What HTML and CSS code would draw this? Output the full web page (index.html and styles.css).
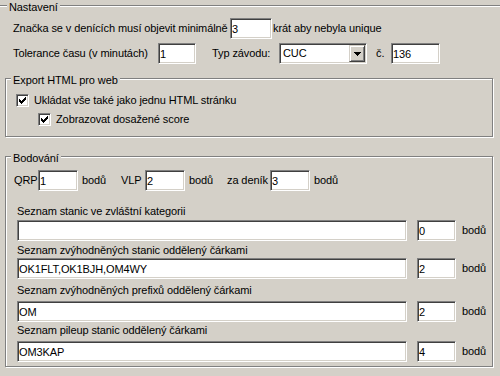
FILE: index.html
```html
<!DOCTYPE html>
<html lang="cs">
<head>
  <meta charset="UTF-8"/>
  <title>Nastavení</title>
  <link rel="stylesheet" href="styles.css">
</head>
<body>
  <div class="group main">
    <span class="caption">Nastavení</span>
    <div class="row r1">
      <span class="lbl w-min">Značka se v denících musí objevit minimálně</span>
      <input class="edit e-min" type="text" value="3">
      <span class="lbl after">krát aby nebyla unique</span>
    </div>
    <div class="row r2">
      <span class="lbl w-tol">Tolerance času (v minutách)</span>
      <input class="edit e-tol" type="text" value="1">
      <span class="lbl w-typ">Typ závodu:</span>
      <div class="combo">
        <span class="combo-text">CUC</span>
        <span class="drop"><svg width="7" height="4" viewBox="0 0 7 4"><path d="M0 0h7v1H0zM1 1h5v1H1zM2 2h3v1H2zM3 3h1v1H3z" fill="#000"/></svg></span>
      </div>
      <span class="lbl w-c">č.</span>
      <input class="edit e-num" type="text" value="136">
    </div>

    <div class="group export">
      <span class="caption">Export HTML pro web</span>
      <label class="check-row c1">
        <span class="check"><svg width="11" height="11" viewBox="0 0 11 11"><path d="M2 4h1v3H2zM3 5h1v3H3zM4 6h1v3H4zM5 5h1v3H5zM6 4h1v3H6zM7 3h1v3H7zM8 2h1v3H8z" fill="#000"/></svg></span>
        Ukládat vše také jako jednu HTML stránku
      </label>
      <label class="check-row c2">
        <span class="check"><svg width="11" height="11" viewBox="0 0 11 11"><path d="M2 4h1v3H2zM3 5h1v3H3zM4 6h1v3H4zM5 5h1v3H5zM6 4h1v3H6zM7 3h1v3H7zM8 2h1v3H8z" fill="#000"/></svg></span>
        Zobrazovat dosažené score
      </label>
    </div>

    <div class="group points">
      <span class="caption">Bodování</span>
      <div class="row pts">
        <span class="lbl w-qrp">QRP</span>
        <input class="edit e-pt" type="text" value="1">
        <span class="lbl unit">bodů</span>
        <span class="lbl w-qrp">VLP</span>
        <input class="edit e-pt" type="text" value="2">
        <span class="lbl unit">bodů</span>
        <span class="lbl w-den">za deník</span>
        <input class="edit e-pt" type="text" value="3">
        <span class="lbl unit">bodů</span>
      </div>

      <div class="item i1">
        <div class="item-label">Seznam stanic ve zvláštní kategorii</div>
        <div class="item-row">
          <input class="edit wide" type="text" value="">
          <input class="edit small" type="text" value="0">
          <span class="lbl">bodů</span>
        </div>
      </div>
      <div class="item i2">
        <div class="item-label">Seznam zvýhodněných stanic oddělený čárkami</div>
        <div class="item-row">
          <input class="edit wide" type="text" value="OK1FLT,OK1BJH,OM4WY">
          <input class="edit small" type="text" value="2">
          <span class="lbl">bodů</span>
        </div>
      </div>
      <div class="item i3">
        <div class="item-label">Seznam zvýhodněných prefixů oddělený čárkami</div>
        <div class="item-row">
          <input class="edit wide" type="text" value="OM">
          <input class="edit small" type="text" value="2">
          <span class="lbl">bodů</span>
        </div>
      </div>
      <div class="item i4">
        <div class="item-label">Seznam pileup stanic oddělený čárkami</div>
        <div class="item-row">
          <input class="edit wide" type="text" value="OM3KAP">
          <input class="edit small" type="text" value="4">
          <span class="lbl">bodů</span>
        </div>
      </div>
    </div>
  </div>
</body>
</html>
```

FILE: styles.css
```css
html, body {
  margin:0;
  width:500px;
  height:376px;
  overflow:hidden;
}
body {
  background:#d4d0c8;
  color:#000;
  font-family:"Liberation Sans",Arial,sans-serif;
  font-size:11px;
  line-height:13px;
  letter-spacing:-0.1px;
}

/* etched group boxes */
.group {
  position:relative;
  box-sizing:border-box;
  border:1px solid #808080;
  box-shadow:inset 1px 1px 0 #fff, 1px 1px 0 #fff;
}
.caption {
  position:absolute;
  left:5px;
  top:-5px;
  padding:0 2px;
  background:#d4d0c8;
  white-space:nowrap;
}
/* outer group is wider and taller than the visible area */
.main {
  margin:5px 0 0 -4px;
  width:504px;
  height:371px;
  padding:12px 0 0 8px;
  border-right:0;
  border-bottom:0;
}
.main > .caption { left:10px; }
.export {
  width:488px;
  margin-top:14px;
  padding:15px 0 10px 0;
}
.points {
  width:488px;
  margin-top:19px;
  padding:13px 0 4px 0;
}

.row {
  display:flex;
  align-items:center;
  white-space:nowrap;
}
.r1, .r2 { margin-left:8px; }
.r2 { margin-top:4px; }
.lbl { white-space:nowrap; flex:none; }
.w-min { width:217px; }
.after { margin-left:1px; }
.w-tol { width:145px; }
.w-typ { width:67px; margin-left:16px; }
.w-c { width:15px; margin-left:9px; }

/* sunken edit fields */
.edit {
  box-sizing:border-box;
  height:21px;
  margin:0;
  padding:0 1px;
  border:1px solid;
  border-color:#808080 #fff #fff #808080;
  box-shadow:inset 1px 1px 0 #404040, inset -1px -1px 0 #d4d0c8;
  background:#fff;
  font-family:inherit;
  font-size:11px;
  letter-spacing:-0.1px;
  color:#000;
  outline:none;
  flex:none;
}
.e-min { width:42px; }
.e-tol { width:38px; }
.e-num { width:49px; }
.e-pt { width:40px; }

.combo {
  box-sizing:border-box;
  display:flex;
  align-items:center;
  width:88px;
  height:21px;
  padding:1px;
  border:1px solid;
  border-color:#808080 #fff #fff #808080;
  box-shadow:inset 1px 1px 0 #404040, inset -1px -1px 0 #d4d0c8;
  background:#fff;
  flex:none;
}
.combo-text { flex:1; padding-left:2px; }
.drop {
  box-sizing:border-box;
  width:16px;
  height:17px;
  display:flex;
  align-items:center;
  justify-content:center;
  background:#d4d0c8;
  border:1px solid;
  border-color:#d4d0c8 #404040 #404040 #d4d0c8;
  box-shadow:inset 1px 1px 0 #fff, inset -1px -1px 0 #808080;
}

/* checkboxes */
.check-row {
  display:flex;
  align-items:center;
  white-space:nowrap;
}
.c1 { margin-left:10px; }
.c2 { margin-left:32px; margin-top:6px; }
.check {
  box-sizing:border-box;
  width:13px;
  height:13px;
  margin-right:5px;
  border:1px solid;
  border-color:#808080 #fff #fff #808080;
  box-shadow:inset 1px 1px 0 #404040, inset -1px -1px 0 #d4d0c8;
  background:#fff;
  flex:none;
}
.check svg { display:block; }

/* points */
.pts { padding-left:8px; }
.w-qrp { width:24px; }
.unit { width:38px; margin-left:4px; }
.w-den { width:43px; }
.pts .unit:nth-of-type(2) { width:39px; }

.item { padding-left:11px; }
.item-row { display:flex; align-items:center; }
.wide { width:390px; }
.small { width:39px; margin-left:10px; }
.item-row .lbl { margin-left:6px; }
.i1 { margin-top:14px; }
.i1 .item-row { margin-top:2px; }
.i2 { margin-top:3px; }
.i2 .item-row { margin-top:1px; }
.i3 { margin-top:5px; }
.i3 .item-row { margin-top:4px; }
.i4 { margin-top:2px; }
.i4 .item-row { margin-top:4px; }
```
